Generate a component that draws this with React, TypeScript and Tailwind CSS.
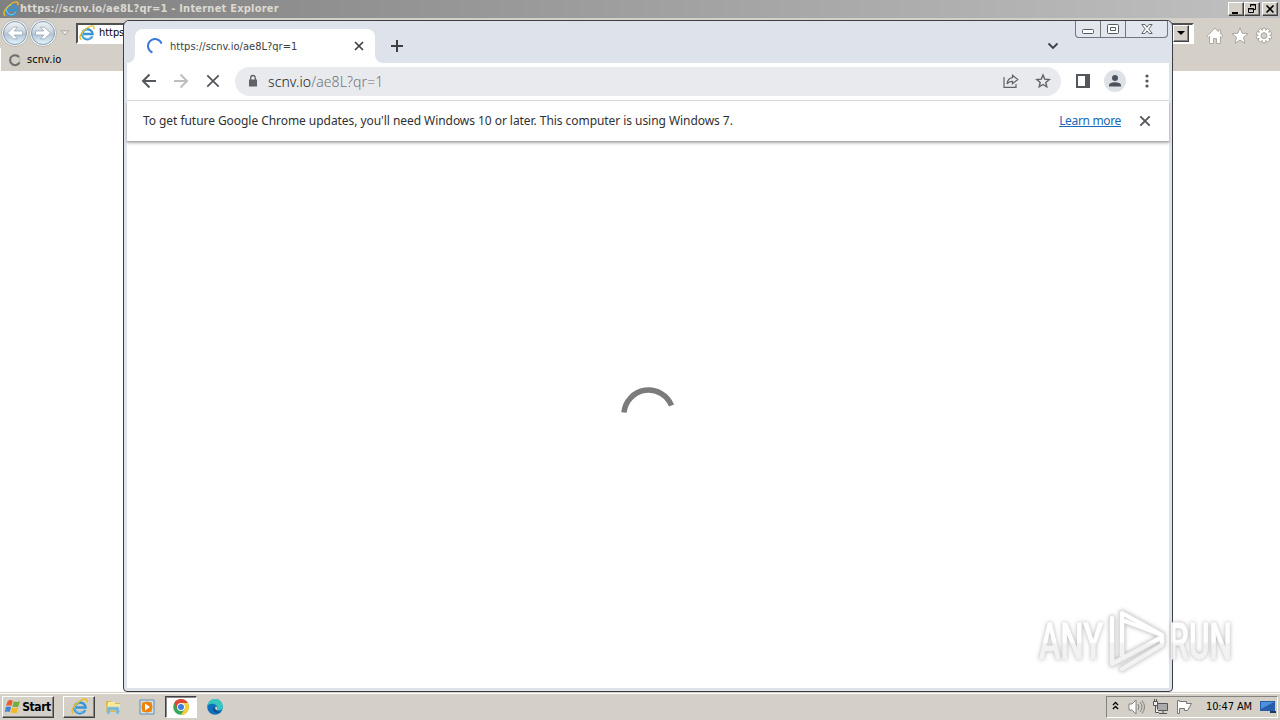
import React from 'react';

interface IconProps {
  className?: string;
}

function IeLogo({ className }: IconProps) {
  return (
    <svg viewBox="0 0 16 16" className={className} fill="none">
      <path d="M13.300 11.200A5.300 5 0 1 1 13.700 9H4.500" stroke="#3695d6" strokeWidth="2.300" />
      <path d="M12.700 10.900A4.800 4.600 0 0 1 3.500 9 4.700 4.700 0 0 1 8 4.300" stroke="#7fcdf4" strokeWidth=".9" />
      <path d="M2.400 14.600C-1.300 13 2.500 7 7.300 3.500 12-.1 16 0 14.800 4.200" stroke="#e9bd27" strokeWidth="1.400" />
    </svg>
  );
}

function NavCircle({ flip }: { flip?: boolean }) {
  return (
    <svg viewBox="0 0 28 28" className={flip ? 'h-7 w-7 shrink-0 -scale-x-100' : 'h-7 w-7 shrink-0'}>
      <defs>
        <linearGradient id="nav" x1="0" y1="0" x2="0" y2="1">
          <stop offset="0" stopColor="#f1f3f5" />
          <stop offset=".45" stopColor="#cbd5de" />
          <stop offset=".55" stopColor="#b2c3d2" />
          <stop offset="1" stopColor="#e4f6ff" />
        </linearGradient>
      </defs>
      <circle cx="14" cy="14" r="13.500" fill="#f4f5f5" stroke="#b7b7b5" />
      <circle cx="14" cy="14" r="11.500" fill="url(#nav)" stroke="#8299ae" />
      <path d="M21.500 12h-8.300l3.300-3.800h-4L6.500 14l6 5.800h4L13.200 16h8.300z" fill="#fff" stroke="#8da2b5" strokeWidth=".7" />
    </svg>
  );
}

function HomeIcon() {
  return (
    <svg viewBox="0 0 18 18" className="h-[18px] w-[18px]" fill="#fff" stroke="#aaa79f" strokeWidth="1">
      <path d="M9 1 1 9.300l1.300 1.300L3.600 9.400v7.100h3.900v-5h3v5h3.900V9.400l1.300 1.200L17 9.300l-2.300-2.400V3h-2.400v1.500z" />
    </svg>
  );
}

function StarIcon() {
  return (
    <svg viewBox="0 0 18 18" className="h-[18px] w-[18px]" fill="#fff" stroke="#aaa79f" strokeWidth="1">
      <path d="m9 .9 2.100 5.300 6 .4-4.700 3.700 1.600 6L9 13.100l-5 3.200 1.600-6L.9 6.600l6-.4z" />
    </svg>
  );
}

function GearIcon() {
  return (
    <svg viewBox="0 0 18 18" className="h-[18px] w-[18px]" fill="#fff" stroke="#aaa79f" strokeWidth="1">
      <path d="M7.500 1.200h3l.4 2.200 1.300-1.900 2.400 1.700-1 2.100 2.200-.8.900 2.800-2 .9 2.200 1-.9 2.800-2.200-.7 1 2-2.400 1.800-1.500-1.700-.4 2.400h-3l-.4-2.400-1.500 1.700-2.400-1.800 1-2-2.200.7-.9-2.800 2.200-1-2-.9.900-2.800 2.200.8-1-2.100 2.400-1.700 1.300 1.900z" />
      <circle cx="9" cy="8.700" r="3" fill="#d4d0c8" />
    </svg>
  );
}

function ClassicButton({ children, className }: { children: React.ReactNode; className?: string }) {
  return (
    <div className={`flex items-center justify-center border border-t-white border-l-white border-r-[#404040] border-b-[#404040] bg-[#d4d0c8] shadow-[inset_-1px_-1px_#858280] ${className}`}>
      {children}
    </div>
  );
}

function ExplorerWindow() {
  return (
    <div className="absolute inset-x-0 top-0 h-[692px] bg-white">
      <div className="flex h-[18px] items-center bg-linear-to-r from-[#808080] to-[#c0c0c0] pr-[2px] pl-[3px]">
        <IeLogo className="h-4 w-4" />
        <span className="ml-px flex-1 font-['DejaVu_Sans_Condensed','DejaVu_Sans',sans-serif] text-[11px] font-bold tracking-[0.22px] whitespace-nowrap text-[#dcd9d2] [font-stretch:condensed]">
          https://scnv.io/ae8L?qr=1 - Internet Explorer
        </span>
        <ClassicButton className="h-[14px] w-4">
          <svg viewBox="0 0 12 12" className="h-3 w-3"><path d="M2 9h6v2H2z" /></svg>
        </ClassicButton>
        <ClassicButton className="h-[14px] w-4">
          <svg viewBox="0 0 12 12" className="h-3 w-3" fill="none" stroke="#000">
            <path d="M4.500 4V1.500h5v5H8M4 2h6M2.500 5.500h5v4h-5zM2 6h6" />
          </svg>
        </ClassicButton>
        <ClassicButton className="ml-[2px] h-[14px] w-4">
          <svg viewBox="0 0 12 12" className="h-3 w-3" stroke="#000" strokeWidth="1.600"><path d="m2.500 2.500 7 7m0-7-7 7" /></svg>
        </ClassicButton>
      </div>
      <div className="flex h-[53px] flex-col bg-[#d4d0c8]">
        <div className="flex h-[30px] items-center pl-px">
          <NavCircle />
          <NavCircle flip />
          <svg viewBox="0 0 10 6" className="ml-[3px] h-[6px] w-[10px] shrink-0"><path d="M1 .8h8L5 5z" fill="#ece9e4" stroke="#aaa7a0" /></svg>
          <div className="ml-[6px] flex h-[21px] w-[1118px] shrink-0 items-center border-2 border-t-[#505050] border-r-white border-b-white border-l-[#505050] bg-white">
            <IeLogo className="ml-px h-4 w-4" />
            <span className="ml-1 flex-1 pt-px font-['DejaVu_Sans_Condensed','DejaVu_Sans',sans-serif] text-[11px] tracking-[-0.05px] [font-stretch:condensed]">https://scnv.io/ae8L?qr=1</span>
            <ClassicButton className="mr-[3px] h-[17px] w-4">
              <svg viewBox="0 0 8 4" className="h-1 w-2"><path d="M0 0h8L4 4z" /></svg>
            </ClassicButton>
          </div>
          <div className="ml-[12px] flex shrink-0 gap-[6.500px] pt-[5px]">
            <HomeIcon />
            <StarIcon />
            <GearIcon />
          </div>
        </div>
        <div className="flex flex-1 items-center border-l border-white pl-[7px]">
          <svg viewBox="0 0 14 14" className="h-[14px] w-[14px]" fill="none" strokeWidth="2">
            <circle cx="7" cy="7" r="5" stroke="#c3c0ba" />
            <path d="M11.500 9.500A5 5 0 1 1 11 4" stroke="#6f6e6c" />
          </svg>
          <span className="ml-[5px] pt-[2px] font-['DejaVu_Sans_Condensed','DejaVu_Sans',sans-serif] text-[11px] tracking-[0.08px] [font-stretch:condensed]">scnv.io</span>
        </div>
      </div>
    </div>
  );
}

function TabStrip() {
  return (
    <div className="relative flex h-[42px] bg-[#dee2ea] pt-2 pl-2">
      <svg viewBox="0 0 8 8" className="absolute bottom-0 left-0 h-2 w-2"><path d="M8 0v8H0a8 8 0 0 0 8-8" fill="#fff" /></svg>
      <div className="flex w-60 items-center rounded-t-lg bg-white pl-3">
        <svg viewBox="0 0 16 16" className="h-4 w-4" fill="none">
          <path d="M5.400 14.500A7 7 0 1 1 14.600 5.600" stroke="#3c78d8" strokeWidth="2" />
        </svg>
        <span className="ml-[7px] flex-1 pt-[2px] font-['DejaVu_Sans_Condensed','DejaVu_Sans',sans-serif] text-[11px] tracking-[0.02px] text-[#3c4043] [font-stretch:condensed]">
          https://scnv.io/ae8L?qr=1
        </span>
        <svg viewBox="0 0 16 16" className="mr-2 h-4 w-4" stroke="#3c4043" strokeWidth="1.700"><path d="m4 4 8 8m0-8-8 8" /></svg>
      </div>
      <svg viewBox="0 0 8 8" className="h-2 w-2 self-end"><path d="M0 0v8h8a8 8 0 0 1-8-8" fill="#fff" /></svg>
      <svg viewBox="0 0 14 14" className="mt-[10px] ml-[7px] h-[14px] w-[14px]" stroke="#3c4043" strokeWidth="2"><path d="M7 1v12M1 7h12" /></svg>
      <svg viewBox="0 0 12 8" className="mt-[13px] mr-[110px] ml-auto h-2 w-3" fill="none" stroke="#3c4043" strokeWidth="1.800"><path d="m1.500 1.500 4.500 4.500 4.500-4.500" /></svg>
      <div className="absolute top-0 right-[1px] flex h-[17px] w-[93px] rounded-b-[4px] border border-t-0 border-[#72777f] bg-[#e2e6ed] text-[#555a62]">
        <div className="flex w-[25px] items-end justify-center border-r border-[#72777f] pb-[3px]">
          <svg viewBox="0 0 12 5" className="h-[5px] w-3"><rect x=".5" y=".5" width="11" height="4" rx="1" fill="#fff" stroke="currentColor" /></svg>
        </div>
        <div className="flex w-[25px] items-center justify-center border-r border-[#72777f]">
          <svg viewBox="0 0 12 10" className="h-[10px] w-3" fill="#fff" stroke="currentColor"><rect x=".5" y=".5" width="11" height="9" rx="1" /><path d="M3.500 3.500h5v3h-5z" /></svg>
        </div>
        <div className="flex flex-1 items-center justify-center">
          <svg viewBox="0 0 12 10" className="h-[10px] w-3">
            <path d="M.8.5H4l2 2.700L8 .5h3.200L7.800 5l3.400 4.500H8L6 6.800 4 9.500H.8L4.200 5z" fill="#fff" stroke="currentColor" strokeWidth=".9" />
          </svg>
        </div>
      </div>
    </div>
  );
}

function Toolbar() {
  return (
    <div className="flex h-[38px] items-center border-b border-[#d9dbde] bg-white px-[14px] pb-px">
      <svg viewBox="0 0 16 16" className="h-4 w-4" fill="none" stroke="#54575b" strokeWidth="2"><path d="M15 8H2m6.500-6.500L2 8l6.500 6.500" /></svg>
      <svg viewBox="0 0 16 16" className="ml-4 h-4 w-4" fill="none" stroke="#bdbec0" strokeWidth="2"><path d="M1 8h13M7.500 1.500 14 8l-6.500 6.500" /></svg>
      <svg viewBox="0 0 16 16" className="ml-4 h-4 w-4" stroke="#54575b" strokeWidth="1.800"><path d="m2.300 2.300 11.400 11.400m0-11.400L2.300 13.700" /></svg>
      <div className="ml-[14px] flex h-[29px] w-[826px] items-center rounded-full bg-[#e8eaed] pr-[10px] pl-[11px]">
        <svg viewBox="0 0 14 14" className="h-[14px] w-[14px]"><path d="M3 5.500h8v7H3z" fill="#5f6368" /><path d="M4.700 6V3.800a2.300 2.300 0 0 1 4.600 0V6" fill="none" stroke="#5f6368" strokeWidth="1.300" /></svg>
        <span className="ml-2 flex-1 pt-px font-['Noto_Sans',sans-serif] text-[14px] font-light tracking-[0.1px] text-[#707479]">
          <span className="text-[#202124]">scnv.io</span>/ae8L?qr=1
        </span>
        <svg viewBox="0 0 16 16" className="h-4 w-4" fill="none" stroke="#5f6368" strokeWidth="1.200">
          <path d="M1 4v10.400h12V11" />
          <path d="M9.500 2.200 14.800 6.500 9.500 10.800V8.300C6.900 8.300 5.300 9 4 11c.4-3.600 2.300-5.900 5.500-6.300z" />
        </svg>
        <svg viewBox="0 0 16 16" className="ml-4 h-4 w-4" fill="none" stroke="#5f6368" strokeWidth="1.400"><path d="m8 2 1.700 4.100 4.500.4-3.400 2.900 1 4.400L8 11.500l-3.800 2.300 1-4.400-3.400-2.900 4.500-.4z" /></svg>
      </div>
      <svg viewBox="0 0 14 14" className="ml-[15px] h-[14px] w-[14px]"><path d="M1 1h12v12H1z" fill="none" stroke="#54575b" strokeWidth="2" /><path d="M9 0h5v14H9z" fill="#54575b" /></svg>
      <div className="ml-[14px] flex h-[22px] w-[22px] items-center justify-center rounded-full bg-[#dee1e6]">
        <svg viewBox="0 0 14 14" className="h-[14px] w-[14px]" fill="#4d525a"><circle cx="7" cy="4" r="3" /><path d="M1 12.500v-1.300C1 9 5 8.200 7 8.200s6 .8 6 3v1.300z" /></svg>
      </div>
      <svg viewBox="0 0 4 14" className="ml-[19px] h-[14px] w-1" fill="#54575b"><circle cx="2" cy="2" r="1.600" /><circle cx="2" cy="7" r="1.600" /><circle cx="2" cy="12" r="1.600" /></svg>
    </div>
  );
}

function ChromeWindow() {
  return (
    <div className="absolute top-5 left-[123px] flex h-[672px] w-[1050px] flex-col rounded-md rounded-b-[4px] border border-[#3c3e42] bg-[#dee2ea] px-[3px] pb-[3px]">
      <TabStrip />
      <Toolbar />
      <div className="z-10 flex h-[40px] shrink-0 items-center bg-white pr-4 pl-4 font-['Noto_Sans',sans-serif] text-[12px] text-[#303134] shadow-[0_1px_1px_#b0b0b0,0_2px_3px_#aaa]">
        <span className="flex-1 tracking-[-0.055px]">To get future Google Chrome updates, you'll need Windows 10 or later. This computer is using Windows 7.</span>
        <span className="tracking-[-0.34px] text-[#1967b8] underline">Learn more</span>
        <svg viewBox="0 0 16 16" className="ml-4 h-4 w-4" stroke="#54575b" strokeWidth="1.900"><path d="m3.300 3.300 9.400 9.400m0-9.400-9.400 9.400" /></svg>
      </div>
      <div className="flex flex-1 items-center justify-center bg-white pb-1">
        <svg viewBox="0 0 54 54" className="h-[54px] w-[54px]" fill="none">
          <path d="M3 26.500A24.700 24.700 0 0 1 50.500 19.500" stroke="#7b7b7b" strokeWidth="5.500" />
        </svg>
      </div>
    </div>
  );
}

function Watermark() {
  return (
    <svg viewBox="0 0 220 70" className="absolute top-[608px] left-[1035px] h-[70px] w-[220px] overflow-visible opacity-90 drop-shadow-[0_0_2px_#aaa]">
      <defs>
        <linearGradient id="mark" gradientUnits="userSpaceOnUse" x1="0" y1="0" x2="0" y2="64">
          <stop offset=".53" stopColor="#fff" />
          <stop offset=".56" stopColor="#f1f1f1" />
        </linearGradient>
      </defs>
      <g fill="url(#mark)" stroke="url(#mark)" strokeWidth=".8" fontFamily="Roboto, sans-serif" fontSize="50" fontWeight="500">
        <text x="4" y="51" textLength="64" lengthAdjust="spacingAndGlyphs">ANY</text>
        <text x="134" y="51" textLength="63" lengthAdjust="spacingAndGlyphs">RUN</text>
      </g>
      <g fill="none" strokeLinejoin="round" strokeLinecap="round">
        <path d="M87 47V5l40 22-40-15M77 10v46l50-27M87 61l40-24v-7" stroke="#dedede" strokeWidth="5.500" />
        <path d="M87 47V5l40 22-40-15M77 10v46l50-27M87 61l40-24v-7" stroke="url(#mark)" strokeWidth="4" />
      </g>
    </svg>
  );
}

function Taskbar() {
  return (
    <div className="absolute inset-x-0 bottom-0 flex h-7 items-center border-t border-[#d4d0c8] bg-[#d4d0c8] pl-[2px] shadow-[inset_0_1px_#fff]">
      <ClassicButton className="h-[22px] w-[52px] gap-px">
        <svg viewBox="0 0 15 15" className="h-[17px] w-[16px] shrink-0">
          <path d="M2.500 2.500Q5 .7 7.300 2.200L6 7Q3.500 5.800 1 7z" fill="#e85d2a" />
          <path d="M8.300 2.600Q11 4 14 2.400l-1.500 5Q10 8.700 7 7.400z" fill="#72ae3d" />
          <path d="M.8 8Q3.400 6.800 5.700 8l-1.300 4.700Q2 11.600-.1 13z" fill="#3d86d1" />
          <path d="M6.700 8.400Q9.700 9.700 12.200 8.300L11 13.300Q8 14.500 5.400 13z" fill="#f2ba24" />
        </svg>
        <span className="font-['DejaVu_Sans_Condensed','DejaVu_Sans',sans-serif] text-[12px] font-bold tracking-[-0.45px] [font-stretch:condensed]">Start</span>
      </ClassicButton>
      <ClassicButton className="ml-[9px] h-[22px] w-8"><IeLogo className="h-[17px] w-[17px]" /></ClassicButton>
      <svg viewBox="0 0 16 16" className="mt-px ml-[10px] h-4 w-4">
        <path d="M1 2h5l1 2h8v9H1z" fill="#e0b54d" />
        <path d="M3 3h7v2h5v6H2z" fill="#f9e99b" />
        <path d="M2 8h12v7h-3v-4H5v4H2z" fill="#76b3d0" stroke="#a4d2e3" strokeWidth=".7" />
      </svg>
      <svg viewBox="0 0 16 16" className="mt-px ml-[18px] h-4 w-4">
        <path d="M1 1h14v14H1z" fill="#cce4f3" stroke="#608eac" /><path d="M3 3h10v10H3z" fill="#f5a241" /><circle cx="8" cy="8" r="5.500" fill="#ee820f" /><path d="m6 4.500 5 3.500-5 3.500z" fill="#fff" />
      </svg>
      <div className="ml-[10px] flex h-[22px] w-8 items-center justify-center border border-t-[#404040] border-r-white border-b-white border-l-[#404040] bg-white shadow-[inset_1px_1px_#888]">
        <svg viewBox="0 0 16 16" className="h-4 w-4">
          <circle cx="8" cy="8" r="7.800" fill="#38a552" />
          <path d="M1.200 4.100A7.800 7.800 0 0 1 14.800 4.100L8 8z" fill="#e24636" />
          <path d="M14.800 4.100A7.800 7.800 0 0 1 8 15.800L11.500 10 8 4.100z" fill="#f9cd35" />
          <path d="M1.200 4.100 4.600 10 8 4.100z" fill="#e24636" />
          <circle cx="8" cy="8" r="3.900" fill="#fff" /><circle cx="8" cy="8" r="3" fill="#397de1" />
        </svg>
      </div>
      <svg viewBox="0 0 16 16" className="mt-px ml-[10px] h-4 w-4">
        <circle cx="8" cy="8" r="7.800" fill="#1170ba" />
        <path d="M.4 7A7.700 7.700 0 0 1 15.800 8c0 3-3 3.600-5.300 3-1.200-.4-.8-1-.4-1.700C11 7 8.500 4.700 5 4.700 2.500 4.700 1 5.700.4 7" fill="#36c6bd" />
        <path d="M6.500 8c-1.500 3 1 6 5 6l3-1.500c-2 .9-6 .2-6.100-3.200z" fill="#0c4d91" />
        <path d="M8 8.800c.6-1.800 2.700-1 2.200.5-.7 1-.3 1.600.8 2-1.600.4-3-.9-3-2.500" fill="#d4d0c8" />
      </svg>
      <div className="mr-[2px] ml-auto flex h-[22px] w-[172px] items-center border border-t-[#858280] border-r-white border-b-white border-l-[#858280] pl-[5px]">
        <svg viewBox="0 0 8 10" className="mb-[2px] h-[10px] w-[7px]" fill="none" stroke="#000" strokeWidth="1.500"><path d="m1 4 3-3 3 3M1 8.500l3-3 3 3" /></svg>
        <svg viewBox="0 0 17 16" className="ml-[9px] h-4 w-[17px]" fill="#fff" stroke="#777" strokeWidth=".9"><path d="M1 5h3l4-4v14l-4-4H1z" /><path d="M10 5q2 3 0 6M12 3q4 5 0 10M14 1.500q5 6.500 0 13" fill="none" /></svg>
        <svg viewBox="0 0 16 16" className="ml-[7px] h-4 w-4" fill="#eee" stroke="#555"><path d="M5.500 4.500h10v7h-10z" fill="#aaa" /><path d="M7 14.500h8M11 12v2M1.500 2.500h4v4h-4zM2.500 0v2M4.500 0v2M3.500 7v6.500H7" /></svg>
        <svg viewBox="0 0 16 16" className="ml-2 h-4 w-4" fill="#fff" stroke="#777"><path d="M1.500 1.500v13h2V9.500h5v2h3l4-7h-5v-2h-7v-1z" /></svg>
        <span className="ml-[14px] flex-1 pt-[2px] font-['DejaVu_Sans_Condensed','DejaVu_Sans',sans-serif] text-[11px] tracking-[-0.12px] whitespace-nowrap [font-stretch:condensed]">10:47 AM</span>
        <svg viewBox="0 0 16 12" className="mr-px h-3 w-4 shrink-0"><path d="M0 0h15v10H0z" fill="#265eac" /><path d="M1 1h13L1 8z" fill="#4b91db" /><path d="M10 10h6v2h-6z" fill="#173968" /></svg>
      </div>
    </div>
  );
}

export default function App() {
  return (
    <div className="relative h-[720px] w-[1280px] overflow-hidden bg-white">
      <ExplorerWindow />
      <ChromeWindow />
      <Taskbar />
      <Watermark />
    </div>
  );
}
